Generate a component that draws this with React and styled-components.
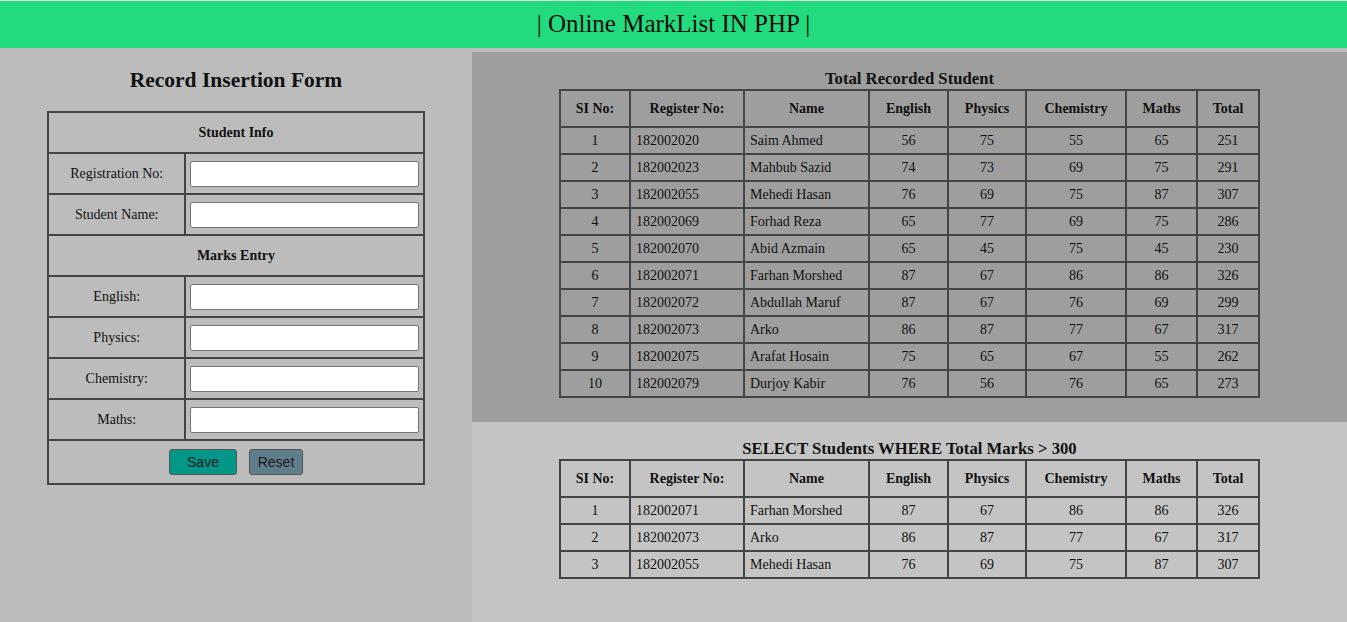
import React from 'react';
import styled, { createGlobalStyle } from 'styled-components';

const GlobalStyle = createGlobalStyle`
  html, body {
    margin: 0;
    padding: 0;
    background: #bcbcbc;
    font-family: 'Liberation Serif', 'Times New Roman', serif;
    color: #111;
  }
  * {
    box-sizing: border-box;
  }
`;

const Header = styled.header`
  height: 48px;
  border-top: 1px solid #dcdcdc;
  background: #21db7e;
  text-align: center;
  font-size: 25px;
  line-height: 45px;
  color: #0a0a0a;
`;

const Main = styled.main`
  display: flex;
  min-height: 574px;
`;

const LeftPane = styled.section`
  width: 472px;
  flex: none;
  background: #bcbcbc;
  padding-top: 20px;
`;

const RightPane = styled.section`
  flex: 1;
  display: flex;
  flex-direction: column;
  padding-top: 4px;
`;

const Title = styled.h2`
  margin: 0 0 19px;
  font-size: 21.5px;
  line-height: 24px;
  text-align: center;
  font-weight: bold;
`;

const FormTable = styled.table`
  width: 80%;
  margin: 0 auto;
  border-collapse: collapse;
  border: 2px solid #444;
  font-size: 14px;
`;

const FormCell = styled.td`
  border: 2px solid #444;
  height: 41px;
  padding: 0 4px;
  text-align: center;
  font-weight: ${(p) => (p.$head ? 'bold' : 'normal')};
  width: ${(p) => p.$w || 'auto'};
`;

const TextInput = styled.input`
  display: block;
  width: 100%;
  height: 26px;
  border: 1px solid #767676;
  border-radius: 2px;
  background: #fff;
  font-size: 14px;
`;

const ButtonRow = styled.div`
  display: flex;
  justify-content: center;
  gap: 12px;
`;

const Button = styled.button`
  height: 26px;
  width: ${(p) => p.$w}px;
  border: 1px solid #555;
  border-radius: 3px;
  background: ${(p) => p.$bg};
  color: #1a1a1a;
  font-family: 'Liberation Sans', Arial, sans-serif;
  font-size: 14px;
  padding: 0;
  cursor: pointer;
`;

const Panel = styled.div`
  background: ${(p) => p.$bg};
  padding: 17px 0 ${(p) => p.$pb}px;
  flex: ${(p) => (p.$grow ? 1 : 'none')};
`;

const DataTable = styled.table`
  width: 80%;
  margin: 0 auto;
  border-collapse: collapse;
  border: 2px solid #444;
  table-layout: fixed;
  font-size: 14px;
`;

const Caption = styled.caption`
  font-weight: bold;
  font-size: 16.7px;
  line-height: 20px;
`;

const Th = styled.th`
  border: 2px solid #444;
  height: 37px;
  font-weight: bold;
  text-align: center;
  padding: 0 5px;
`;

const Td = styled.td`
  border: 2px solid #444;
  height: 27px;
  padding: 0 5px;
  text-align: ${(p) => (p.$left ? 'left' : 'center')};
  white-space: nowrap;
`;

const columns = [
  { label: 'SI No:', w: 70 },
  { label: 'Register No:', w: 114 },
  { label: 'Name', w: 125 },
  { label: 'English', w: 79 },
  { label: 'Physics', w: 78 },
  { label: 'Chemistry', w: 100 },
  { label: 'Maths', w: 71 },
  { label: 'Total', w: 62 },
];

const students = [
  ['182002020', 'Saim Ahmed', 56, 75, 55, 65],
  ['182002023', 'Mahbub Sazid', 74, 73, 69, 75],
  ['182002055', 'Mehedi Hasan', 76, 69, 75, 87],
  ['182002069', 'Forhad Reza', 65, 77, 69, 75],
  ['182002070', 'Abid Azmain', 65, 45, 75, 45],
  ['182002071', 'Farhan Morshed', 87, 67, 86, 86],
  ['182002072', 'Abdullah Maruf', 87, 67, 76, 69],
  ['182002073', 'Arko', 86, 87, 77, 67],
  ['182002075', 'Arafat Hosain', 75, 65, 67, 55],
  ['182002079', 'Durjoy Kabir', 76, 56, 76, 65],
];

const total = (s) => s[2] + s[3] + s[4] + s[5];

const topScorers = ['182002071', '182002073', '182002055'].map((id) =>
  students.find((s) => s[0] === id)
);

const MarkTable = ({ caption, rows }) => (
  <DataTable>
    <Caption>{caption}</Caption>
    <colgroup>
      {columns.map((c) => (
        <col key={c.label} style={{ width: c.w }} />
      ))}
    </colgroup>
    <thead>
      <tr>
        {columns.map((c) => (
          <Th key={c.label}>{c.label}</Th>
        ))}
      </tr>
    </thead>
    <tbody>
      {rows.map((s, i) => (
        <tr key={s[0]}>
          <Td>{i + 1}</Td>
          <Td $left>{s[0]}</Td>
          <Td $left>{s[1]}</Td>
          <Td>{s[2]}</Td>
          <Td>{s[3]}</Td>
          <Td>{s[4]}</Td>
          <Td>{s[5]}</Td>
          <Td>{total(s)}</Td>
        </tr>
      ))}
    </tbody>
  </DataTable>
);

const FieldRow = ({ label }) => (
  <tr>
    <FormCell $w="137px">{label}</FormCell>
    <FormCell>
      <TextInput type="text" />
    </FormCell>
  </tr>
);

export default function App() {
  return (
    <>
      <GlobalStyle />
      <Header>| Online MarkList IN PHP |</Header>
      <Main>
        <LeftPane>
          <Title>Record Insertion Form</Title>
          <form onSubmit={(e) => e.preventDefault()}>
            <FormTable>
              <tbody>
                <tr>
                  <FormCell $head colSpan={2}>Student Info</FormCell>
                </tr>
                <FieldRow label="Registration No:" />
                <FieldRow label="Student Name:" />
                <tr>
                  <FormCell $head colSpan={2}>Marks Entry</FormCell>
                </tr>
                <FieldRow label="English:" />
                <FieldRow label="Physics:" />
                <FieldRow label="Chemistry:" />
                <FieldRow label="Maths:" />
                <tr>
                  <FormCell colSpan={2} style={{ height: 44 }}>
                    <ButtonRow>
                      <Button type="submit" $w={68} $bg="#009688">Save</Button>
                      <Button type="reset" $w={54} $bg="#607d8b">Reset</Button>
                    </ButtonRow>
                  </FormCell>
                </tr>
              </tbody>
            </FormTable>
          </form>
        </LeftPane>
        <RightPane>
          <Panel $bg="#9e9e9e" $pb={24}>
            <MarkTable caption="Total Recorded Student" rows={students} />
          </Panel>
          <Panel $bg="#c4c4c4" $pb={20} $grow>
            <MarkTable caption="SELECT Students WHERE Total Marks > 300" rows={topScorers} />
          </Panel>
        </RightPane>
      </Main>
    </>
  );
}
